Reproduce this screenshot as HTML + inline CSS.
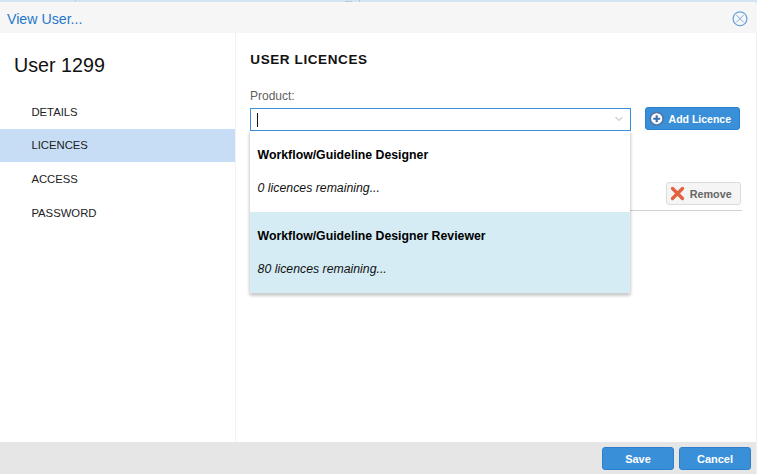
<!DOCTYPE html>
<html><head><meta charset="utf-8">
<style>
*{margin:0;padding:0;box-sizing:border-box}
html,body{width:757px;height:474px;overflow:hidden;background:#efefef;font-family:"Liberation Sans",sans-serif}
.abs{position:absolute}
#topbar{left:0;top:0;width:757px;height:6px;background:#d3e4f5}
#header{left:0;top:2px;width:757px;height:31px;background:#f6f6f6;border-top:1px solid #f9f9f8;border-top-right-radius:3px}
#title{left:7px;top:11px;font-size:14.2px;line-height:16px;color:#1f78cc;white-space:nowrap}
#body{left:0;top:33px;width:756px;height:409px;background:#fff}
#side{left:0;top:33px;width:236px;height:409px;background:#fff;border-right:1px solid #f2f2f2}
#user{left:14px;top:53.2px;transform:scale(0.985,1.045);transform-origin:0 0;font-size:20px;line-height:23px;color:#111;white-space:nowrap}
.nav{left:0;width:235px;height:33px;font-size:11.3px;line-height:13px;color:#222;padding-left:32px;white-space:nowrap}
.nav span{position:absolute;left:31.4px}
#footer{left:0;top:442px;width:756px;height:32px;background:#e6e6e6}
.btn{height:23px;width:72px;background:#3a90d8;border:1px solid #2b7fcc;border-radius:3px;color:#fff;font-weight:bold;font-size:11px;text-align:center}
.btn span{position:absolute;left:0;right:0;top:5px;line-height:13px}
#h2{left:250.3px;top:51.5px;font-size:13.5px;font-weight:bold;letter-spacing:0.6px;line-height:15px;color:#111;white-space:nowrap}
#lbl{left:250px;top:89px;font-size:12px;line-height:14px;color:#606060;white-space:nowrap}
#input{left:250px;top:108px;width:381px;height:23px;border:1px solid #3b8fd8;background:#fff}
#caret{left:257px;top:113px;width:1px;height:14px;background:#111}
#addbtn{left:645px;top:107px;width:95px;height:23px;background:#3a90d8;border:1px solid #2b7fcc;border-radius:3px}
#addtxt{left:668.6px;top:112.7px;font-size:10.5px;font-weight:bold;line-height:13px;color:#fff;white-space:nowrap}
#rmbtn{left:666px;top:182px;width:75px;height:23px;background:#f5f5f5;border:1px solid #dcdcdc;border-radius:3px}
#rmtxt{left:689.7px;top:188px;font-size:10.8px;font-weight:bold;line-height:13px;color:#666;white-space:nowrap}
#hline{left:250px;top:210px;width:492px;height:1px;background:#d0d0d0}
#dd{left:250px;top:131px;width:380px;height:162px;background:#fff;box-shadow:0 2px 3px 1px rgba(0,0,0,0.2);clip-path:inset(0 -8px -8px -8px);border-radius:0 0 2px 2px}
.it{position:absolute;left:0;width:380px;height:81px}
.it b{position:absolute;left:7.6px;top:17px;font-size:12.3px;line-height:14px;color:#000;white-space:nowrap}
.it i{position:absolute;left:7.6px;top:50px;font-size:12.3px;line-height:14px;color:#111;white-space:nowrap}
</style></head>
<body>
<div class="abs" id="topbar"></div>
<div class="abs" style="left:75px;top:0;width:1px;height:2px;background:#b9cfe4"></div>
<div class="abs" style="left:345px;top:1px;width:7px;height:1px;background:#b4c8da"></div>
<div class="abs" style="left:359px;top:0;width:1px;height:2px;background:#aecbd6"></div>
<div class="abs" id="header"></div>
<div class="abs" id="title">View User...</div>
<svg class="abs" style="left:731px;top:10px" width="18" height="18" viewBox="0 0 18 18">
 <circle cx="9" cy="8.8" r="6.9" fill="none" stroke="#6aa2da" stroke-width="1.25"/>
 <path d="M5.4 5.1 L12.6 12.3 M12.6 5.1 L5.4 12.3" stroke="#78abe0" stroke-width="1"/>
</svg>
<div class="abs" id="body"></div>
<div class="abs" id="side"></div>
<div class="abs" id="user">User 1299</div>
<div class="abs nav" style="top:95px"><span style="top:11px">DETAILS</span></div>
<div class="abs nav" style="top:129px;background:#c6ddf5"><span style="top:10px">LICENCES</span></div>
<div class="abs nav" style="top:162px"><span style="top:11px">ACCESS</span></div>
<div class="abs nav" style="top:196px"><span style="top:11px">PASSWORD</span></div>

<div class="abs" id="h2">USER LICENCES</div>
<div class="abs" id="lbl">Product:</div>
<div class="abs" id="input"></div>
<div class="abs" id="caret"></div>
<svg class="abs" style="left:614px;top:115px" width="10" height="8" viewBox="0 0 10 8">
 <path d="M1.6 2.1 L5 5.5 L8.4 2.1" fill="none" stroke="#a2a2a2" stroke-width="0.9"/>
</svg>
<div class="abs" id="addbtn"></div>
<svg class="abs" style="left:648px;top:110px" width="18" height="18" viewBox="0 0 18 18">
 <circle cx="8.7" cy="8.7" r="6.4" fill="#fff" stroke="#4f76aa" stroke-width="1.7"/>
 <path d="M8.7 5.2 V12.2 M5.2 8.7 H12.2" stroke="#3b6fae" stroke-width="2.1"/>
</svg>
<div class="abs" id="addtxt">Add Licence</div>
<div class="abs" id="hline"></div>
<div class="abs" id="rmbtn"></div>
<svg class="abs" style="left:670px;top:186px" width="15" height="15" viewBox="0 0 15 15">
 <path d="M2.5 2.5 L12.5 12.5 M12.5 2.5 L2.5 12.5" stroke="#e2613f" stroke-width="3.3" stroke-linecap="round"/>
</svg>
<div class="abs" id="rmtxt">Remove</div>

<div class="abs" id="dd">
 <div class="it" style="top:0"><b>Workflow/Guideline Designer</b><i>0 licences remaining...</i></div>
 <div class="it" style="top:81px;background:#d5ecf5;border-radius:0 0 2px 2px"><b>Workflow/Guideline Designer Reviewer</b><i>80 licences remaining...</i></div>
</div>

<div class="abs" id="footer"></div>
<div class="abs btn" style="left:602px;top:447px"><span>Save</span></div>
<div class="abs btn" style="left:679px;top:447px"><span>Cancel</span></div>
</body></html>
